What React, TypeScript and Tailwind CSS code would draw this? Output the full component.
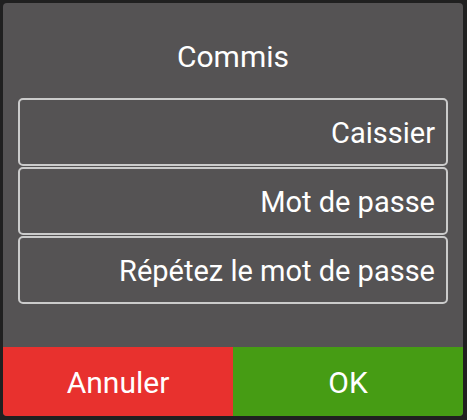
const fields = ["Caissier", "Mot de passe", "Répétez le mot de passe"];

const App = () => {
  return (
    <div className="w-[467px] h-[420px] bg-[#202020] pt-[3px] px-[3px] font-['Roboto',sans-serif]">
      <div className="w-[460px] h-[413px] bg-[#555354] rounded-[4px] overflow-hidden flex flex-col">
        <h1 className="h-[95px] flex items-center justify-center pt-[11px] text-[30px] text-white">
          Commis
        </h1>

        <div className="flex flex-col gap-[1px] px-[15px]">
          {fields.map((f) => (
            <div
              key={f}
              className="h-[68px] border-2 border-[#cbcbcb] rounded-[5px] flex items-center justify-end pr-[11px] pt-[3px] text-[29px] text-white"
            >
              {f}
            </div>
          ))}
        </div>

        <div className="mt-auto flex h-[69px]">
          <button className="w-[230px] bg-[#e8312e] text-white text-[30px] pt-[2px]">Annuler</button>
          <button className="flex-1 bg-[#469c14] text-white text-[30px] pt-[2px]">OK</button>
        </div>
      </div>
    </div>
  );
};

export default App;
